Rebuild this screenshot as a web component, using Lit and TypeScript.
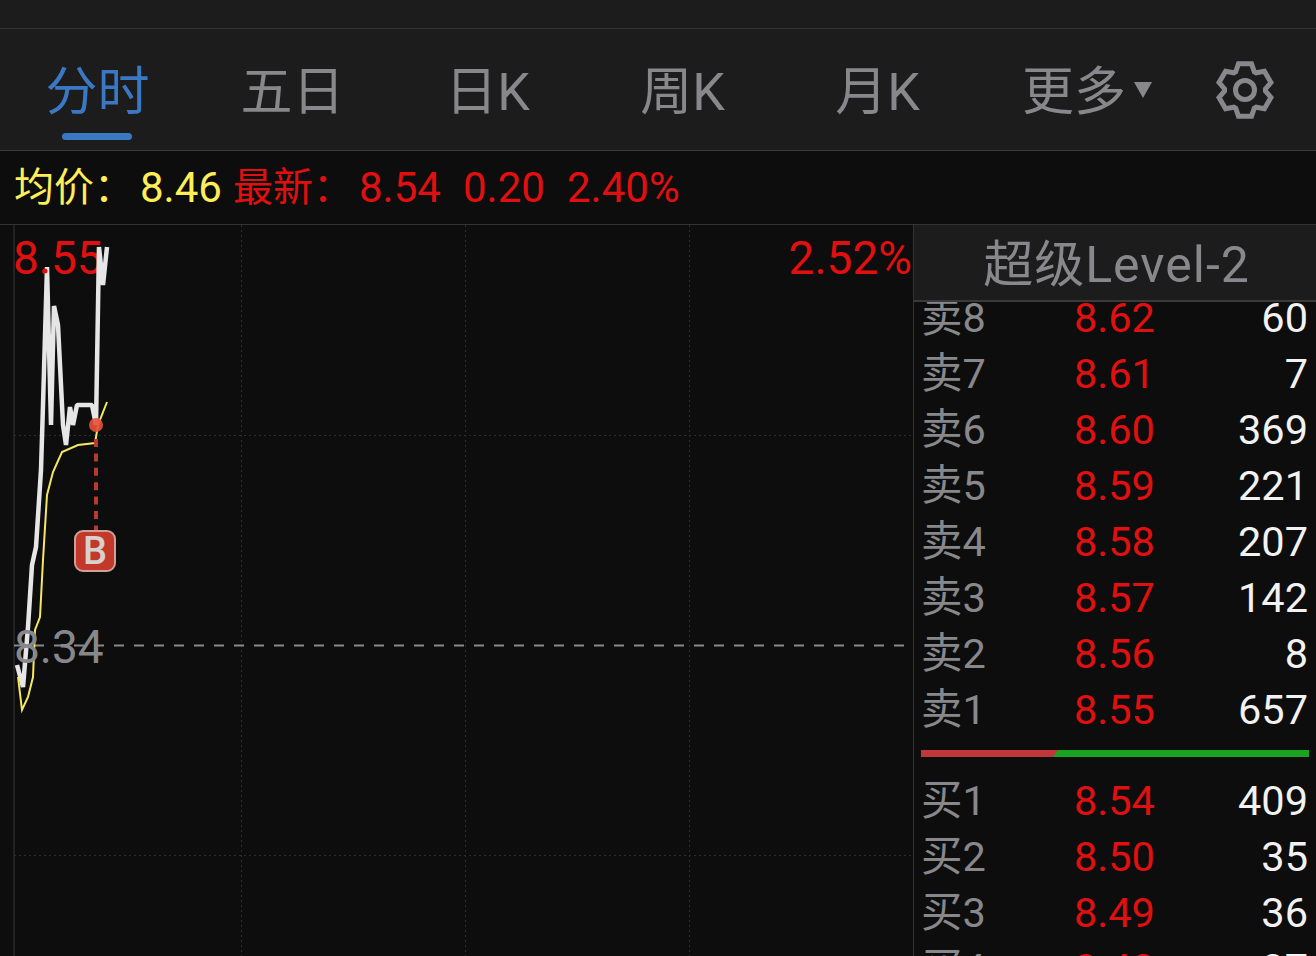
import { LitElement, html, css, svg } from "lit";
import { customElement } from "lit/decorators.js";

const gearPoints = (cx: number, cy: number) => {
  const pts: string[] = [];
  const p = (r: number, deg: number) => {
    const a = (deg * Math.PI) / 180;
    return `${(cx + r * Math.cos(a)).toFixed(2)},${(cy + r * Math.sin(a)).toFixed(2)}`;
  };
  for (let i = 0; i < 6; i++) {
    const a = -90 + i * 60;
    pts.push(p(20.5, a - 27), p(27, a - 14), p(27, a + 14), p(20.5, a + 27));
  }
  return pts.join(" ");
};

const WHITE = "17,665 23,687 28,627 32,565 36,547 41,470 43,405 47,267 51,425 54,306 58,325 63,425 66,445 70,407 73,425 77,405 92,405 96,425 99,247 103,285 107,247";
const YELLOW = "18,677 22,710 28,697 33,677 35,630 40,617 43,560 47,495 53,472 62,452 78,445 95,443 98,425 107,402";

const TABS = ["分时", "五日", "日K", "周K", "月K"];
const ASKS: [string, string, string][] = [
  ["卖8", "8.62", "60"], ["卖7", "8.61", "7"], ["卖6", "8.60", "369"], ["卖5", "8.59", "221"],
  ["卖4", "8.58", "207"], ["卖3", "8.57", "142"], ["卖2", "8.56", "8"], ["卖1", "8.55", "657"],
];
const BIDS: [string, string, string][] = [
  ["买1", "8.54", "409"], ["买2", "8.50", "35"], ["买3", "8.49", "36"], ["买4", "8.48", "87"],
];

@customElement("app-root")
export class AppRoot extends LitElement {
  static styles = css`
    :host {
      display: block; width: 1316px; height: 956px; overflow: hidden; background: #0d0d0d;
      font-family: Roboto, "Noto Sans CJK SC", sans-serif; font-size: 41.5px; color: #88888c;
    }
    .status { height: 28px; background: #1c1c1c; border-bottom: 1px solid #333; }
    .tabs {
      height: 121px; background: #1c1c1c; border-bottom: 1px solid #3a3a3a;
      display: grid; grid-template-columns: repeat(6, 195px) 1fr; align-items: center;
    }
    .tab {
      position: relative; display: flex; justify-content: center; align-items: center;
      height: 100%; font-size: 52px; line-height: 1; padding-top: 6px; box-sizing: border-box;
    }
    .tab.on { color: #3a78c4; }
    .tab.on::after {
      content: ""; position: absolute; left: 62px; width: 70px; top: 104px; height: 7px;
      border-radius: 4px; background: #3a78c4;
    }
    .tab.more { justify-content: flex-start; padding-left: 47px; }
    .caret { width: 18px; height: 16px; margin-left: 8px; margin-bottom: 6px; fill: #88888c; flex: none; }
    .gear { width: 66px; height: 66px; justify-self: center; margin-left: 3px; }
    .info {
      height: 73px; border-bottom: 1px solid #333; padding-left: 14px; display: flex; align-items: center;
      font-size: 42px; line-height: 1; color: #e01010; box-sizing: content-box;
    }
    .info .y { color: #ffee58; }
    .lab { font-size: 40px; width: 120px; flex: none; }
    .num { width: 80px; flex: none; white-space: nowrap; }
    .g6 { margin-left: 6px; }
    .g13 { margin-left: 13px; }
    .g24 { margin-left: 24px; }
    .main { display: flex; height: 731px; }
    .chart { position: relative; width: 913px; flex: none; }
    .chart svg { display: block; width: 913px; height: 731px; }
    .ctext { font-family: Roboto, sans-serif; font-size: 46px; }
    .badge {
      position: absolute; left: 74px; top: 305px; width: 42px; height: 42px; box-sizing: border-box;
      border: 2px solid #cf9f98; border-radius: 9px; background: #c2392c; color: #d8d0ce;
      display: flex; align-items: center; justify-content: center;
      font: 500 38px/1 Roboto, sans-serif;
    }
    .side { flex: 1; border-left: 1px solid #333; display: flex; flex-direction: column; overflow: hidden; }
    .head {
      height: 77px; flex: none; position: relative; z-index: 1; background: #1c1c1c;
      border-bottom: 2px solid #3a3a3a; box-sizing: border-box; display: flex;
      align-items: center; justify-content: center; font-size: 50px; line-height: 1; letter-spacing: 1px;
      padding: 5px 0 0 3px;
    }
    .book { margin-top: -12px; padding: 0 8px 0 7px; }
    .row { height: 56px; display: grid; grid-template-columns: 1fr auto 1fr; align-items: center; line-height: 1; }
    .row .p { color: #e01010; }
    .row .v { text-align: right; color: #f2f2f2; }
    .bar { height: 7px; background: #1aa321; margin: 12px -1px 16px 0; }
    .bar div { height: 100%; background: #c0373a; clip-path: polygon(0 0, 100% 0, calc(100% - 5px) 100%, 0 100%); }
  `;

  row(r: [string, string, string]) {
    return html`<div class="row"><span>${r[0]}</span><span class="p">${r[1]}</span><span class="v">${r[2]}</span></div>`;
  }

  render() {
    return html`
      <div class="status"></div>
      <div class="tabs">
        ${TABS.map((t, i) => html`<div class="tab ${i === 0 ? "on" : ""}">${t}</div>`)}
        <div class="tab more">更多<svg class="caret" viewBox="0 0 18 16"><path d="M0 0H18L9 16Z"/></svg></div>
        <svg class="gear" viewBox="0 0 66 66" fill="none" stroke="#88888c" stroke-width="5" stroke-linejoin="miter">
          <polygon points=${gearPoints(33, 33)}></polygon>
          <circle cx="33" cy="33" r="9.5"></circle>
        </svg>
      </div>
      <div class="info">
        <span class="lab y">均价：</span><span class="num g6 y">8.46</span>
        <span class="lab g13">最新：</span><span class="num g6">8.54</span>
        <span class="num g24">0.20</span><span class="num g24">2.40%</span>
      </div>
      <div class="main">
        <div class="chart">
          <svg viewBox="0 225 913 731">
            ${svg`
              <g stroke="#2a2a2a" stroke-width="1.5"><line x1="14" y1="225" x2="14" y2="956"></line></g>
              <g stroke="#2c2c2c" stroke-width="1" stroke-dasharray="2 3">
                <line x1="241.5" y1="225" x2="241.5" y2="956"></line>
                <line x1="465.5" y1="225" x2="465.5" y2="956"></line>
                <line x1="689.5" y1="225" x2="689.5" y2="956"></line>
                <line x1="14" y1="435.5" x2="913" y2="435.5"></line>
                <line x1="14" y1="855.5" x2="913" y2="855.5"></line>
              </g>
              <line x1="14" y1="645.5" x2="906" y2="645.5" stroke="#8a8a8a" stroke-width="2" stroke-dasharray="10 10"></line>
              <text class="ctext" x="13" y="274" fill="#e01010">8.55</text>
              <text class="ctext" x="912" y="274" fill="#e01010" text-anchor="end">2.52%</text>
              <polyline points=${WHITE} fill="none" stroke="#e6e6e6" stroke-width="4.5" stroke-linejoin="bevel"></polyline>
              <polyline points=${YELLOW} fill="none" stroke="#f5e663" stroke-width="2"></polyline>
              <circle cx="45" cy="271" r="2.5" fill="#e01010"></circle>
              <line x1="96" y1="439" x2="96" y2="530" stroke="#b83a30" stroke-width="4" stroke-dasharray="8 6.4"></line>
              <circle cx="96" cy="425" r="7" fill="#e8503a" fill-opacity="0.9"></circle>
              <text class="ctext" x="14" y="663" fill="#88888c">8.34</text>
            `}
          </svg>
          <div class="badge">B</div>
        </div>
        <div class="side">
          <div class="head">超级Level-2</div>
          <div class="book">
            ${ASKS.map((r) => this.row(r))}
            <div class="bar"><div style="width:137px"></div></div>
            ${BIDS.map((r) => this.row(r))}
          </div>
        </div>
      </div>
    `;
  }
}
